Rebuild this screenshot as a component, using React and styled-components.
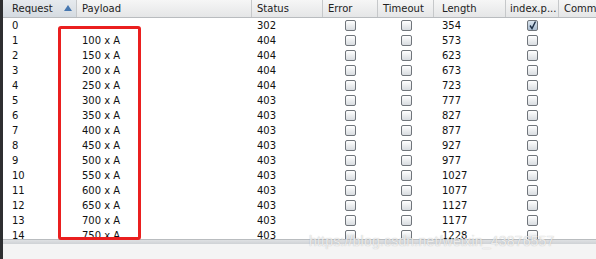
import React from "react";
import styled, { createGlobalStyle } from "styled-components";

const GlobalStyle = createGlobalStyle`
  html, body {
    margin: 0;
    padding: 0;
    background: #f4f4f4;
  }
  body {
    font-family: "DejaVu Sans", "Liberation Sans", sans-serif;
  }
`;

const COLS = [
  { key: "req", label: "Request", width: 74, pad: 9 },
  { key: "payload", label: "Payload", width: 175, pad: 5 },
  { key: "status", label: "Status", width: 71, pad: 5 },
  { key: "error", label: "Error", width: 55, pad: 5, check: true },
  { key: "timeout", label: "Timeout", width: 56, pad: 5, check: true },
  { key: "length", label: "Length", width: 72, pad: 8 },
  { key: "index", label: "index.p...", width: 53, pad: 4, check: true },
  { key: "comm", label: "Comm", width: 40, pad: 5 },
];

const ROWS = [
  ["0", "", "302", "354", true],
  ["1", "100 x A", "404", "573"],
  ["2", "150 x A", "404", "623"],
  ["3", "200 x A", "404", "673"],
  ["4", "250 x A", "404", "723"],
  ["5", "300 x A", "403", "777"],
  ["6", "350 x A", "403", "827"],
  ["7", "400 x A", "403", "877"],
  ["8", "450 x A", "403", "927"],
  ["9", "500 x A", "403", "977"],
  ["10", "550 x A", "403", "1027"],
  ["11", "600 x A", "403", "1077"],
  ["12", "650 x A", "403", "1127"],
  ["13", "700 x A", "403", "1177"],
  ["14", "750 x A", "403", "1228"],
];

const Screen = styled.div`
  display: flex;
  width: 596px;
  height: 259px;
  overflow: hidden;
`;

const Strip = styled.div`
  width: 3px;
  flex-shrink: 0;
  background: #2e2f31;
`;

const Panel = styled.div`
  position: relative;
  flex: 1;
  display: flex;
  flex-direction: column;
  background: #f4f4f4;
`;

const Viewport = styled.div`
  height: 239px;
  overflow: hidden;
  background: #fff;
  display: flex;
  flex-direction: column;
`;

const HeaderRow = styled.div`
  display: flex;
  height: 17px;
  flex-shrink: 0;
  border-bottom: 1px solid #b9bcbf;
  background: linear-gradient(#f6f6f6, #e5e6e7);
`;

const HeaderCell = styled.div`
  position: relative;
  display: flex;
  align-items: center;
  width: ${(p) => p.$w}px;
  flex-shrink: 0;
  padding-left: ${(p) => p.$pad}px;
  box-sizing: border-box;
  font-size: 10px;
  color: #222;
  border-right: 1px solid #c6c8ca;
  background: ${(p) =>
    p.$sorted ? "linear-gradient(#e6eaee, #d5dbe1)" : "transparent"};
`;

const SortArrow = styled.span`
  position: absolute;
  right: 4px;
  top: 5px;
  width: 0;
  height: 0;
  border-left: 4px solid transparent;
  border-right: 4px solid transparent;
  border-bottom: 6px solid #4677b0;
`;

const Row = styled.div`
  display: flex;
  height: 15px;
  flex-shrink: 0;
`;

const Cell = styled.div`
  display: flex;
  align-items: center;
  justify-content: ${(p) => (p.$center ? "center" : "flex-start")};
  width: ${(p) => p.$w}px;
  flex-shrink: 0;
  padding-left: ${(p) => (p.$center ? 0 : p.$pad)}px;
  box-sizing: border-box;
  font-size: 10px;
  color: #111;
  white-space: nowrap;
`;

const Box = styled.span`
  position: relative;
  display: inline-block;
  width: 9px;
  height: 9px;
  border: 1px solid #70757b;
  border-radius: 2px;
  background: ${(p) =>
    p.$on
      ? "linear-gradient(#dbe5ef, #a9bcd0)"
      : "linear-gradient(#ffffff, #d8dce0)"};
`;

const Tick = styled.svg`
  position: absolute;
  left: 1px;
  top: 0;
`;

const ScrollBand = styled.div`
  height: 4px;
  border-top: 1px solid #b9bcbf;
  background: linear-gradient(#dfe1e3, #cfd2d5);
`;

const Rest = styled.div`
  flex: 1;
  background: #f4f4f4;
`;

const Highlight = styled.div`
  position: absolute;
  left: 55px;
  top: 26px;
  width: 83px;
  height: 214px;
  box-sizing: border-box;
  border: 3px solid #ea1f1f;
  border-radius: 3px;
  pointer-events: none;
`;

const Watermark = styled.div`
  position: absolute;
  left: 306px;
  top: 233px;
  font-family: "Liberation Sans", Arial, sans-serif;
  font-size: 14px;
  color: rgba(255, 255, 255, 0.75);
  text-shadow: 0 0 1px rgba(120, 120, 120, 0.55);
  letter-spacing: 0.2px;
`;

const Check = ({ on }) => (
  <Box $on={on}>
    {on && (
      <Tick width="8" height="9" viewBox="0 0 8 9">
        <path d="M1 4.5 L3 7.5 L6.5 0.5" fill="none" stroke="#1d2f46" strokeWidth="1.4" />
      </Tick>
    )}
  </Box>
);

export default function App() {
  return (
    <>
      <GlobalStyle />
      <Screen>
        <Strip />
        <Panel>
          <Viewport>
            <HeaderRow>
              {COLS.map((c, i) => (
                <HeaderCell key={c.key} $w={c.width} $pad={c.pad} $sorted={i === 0}>
                  {c.label}
                  {i === 0 && <SortArrow />}
                </HeaderCell>
              ))}
            </HeaderRow>
            {ROWS.map(([req, payload, status, length, checked]) => (
              <Row key={req}>
                <Cell $w={COLS[0].width} $pad={COLS[0].pad}>{req}</Cell>
                <Cell $w={COLS[1].width} $pad={COLS[1].pad}>{payload}</Cell>
                <Cell $w={COLS[2].width} $pad={COLS[2].pad}>{status}</Cell>
                <Cell $w={COLS[3].width} $center><Check /></Cell>
                <Cell $w={COLS[4].width} $center><Check /></Cell>
                <Cell $w={COLS[5].width} $pad={COLS[5].pad}>{length}</Cell>
                <Cell $w={COLS[6].width} $center><Check on={checked} /></Cell>
                <Cell $w={COLS[7].width} $pad={COLS[7].pad} />
              </Row>
            ))}
          </Viewport>
          <ScrollBand />
          <Rest />
          <Highlight />
          <Watermark>https://blog.csdn.net/weixin_43876557</Watermark>
        </Panel>
      </Screen>
    </>
  );
}
